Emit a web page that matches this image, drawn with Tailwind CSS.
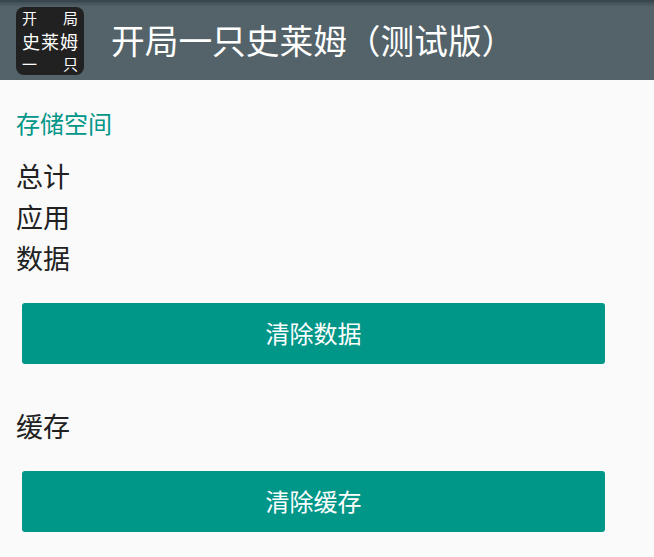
<!DOCTYPE html>
<html lang="zh">
<head>
  <meta charset="UTF-8">
  <meta name="viewport" content="width=device-width, initial-scale=1.0">
  <title>存储空间</title>
  <script src="https://cdn.jsdelivr.net/npm/@tailwindcss/browser@4"></script>
</head>
<body class="bg-[#fafafa] h-[557px] w-[654px] overflow-hidden font-['Noto_Sans_CJK_SC','Liberation_Sans',sans-serif]">
  <header class="h-20 bg-[#546369] flex flex-col">
    <div class="h-[2px] bg-[#37474f]"></div>
    <div class="h-[5px] bg-gradient-to-b from-[#414f55] to-[#546369]"></div>
    <div class="flex items-center flex-1 pl-4 -mt-[7px]">
      <div class="mt-[2px] w-[68px] h-[68px] bg-[#212121] rounded-lg flex flex-col justify-between px-[6px] py-[1px] text-white text-[15px] leading-[20px] shrink-0">
        <div class="flex justify-between"><span>开</span><span>局</span></div>
        <div class="flex justify-between text-[18px] leading-[22px] -mt-[1px]"><span>史</span><span>莱</span><span>姆</span></div>
        <div class="flex justify-between"><span>一</span><span>只</span></div>
      </div>
      <h1 class="ml-[27px] text-white text-[33.7px] leading-none whitespace-nowrap">开局一只史莱姆（测试版）</h1>
    </div>
  </header>

  <main class="px-4">
    <h2 class="text-[#009688] text-[24px] leading-8 mt-[27px]">存储空间</h2>
    <div class="mt-[16px] text-[#212121] text-[27px] leading-[41px]">
      <p>总计</p>
      <p>应用</p>
      <p>数据</p>
    </div>
    <button class="block mt-[25px] ml-[6px] w-[583px] h-[61px] pb-[2px] bg-[#009688] text-white text-[24px] rounded-[3px]">清除数据</button>
    <p class="mt-[41px] text-[#212121] text-[27px] leading-[41px]">缓存</p>
    <button class="block mt-[25px] ml-[6px] w-[583px] h-[61px] pb-[2px] bg-[#009688] text-white text-[24px] rounded-[3px]">清除缓存</button>
  </main>
</body>
</html>
